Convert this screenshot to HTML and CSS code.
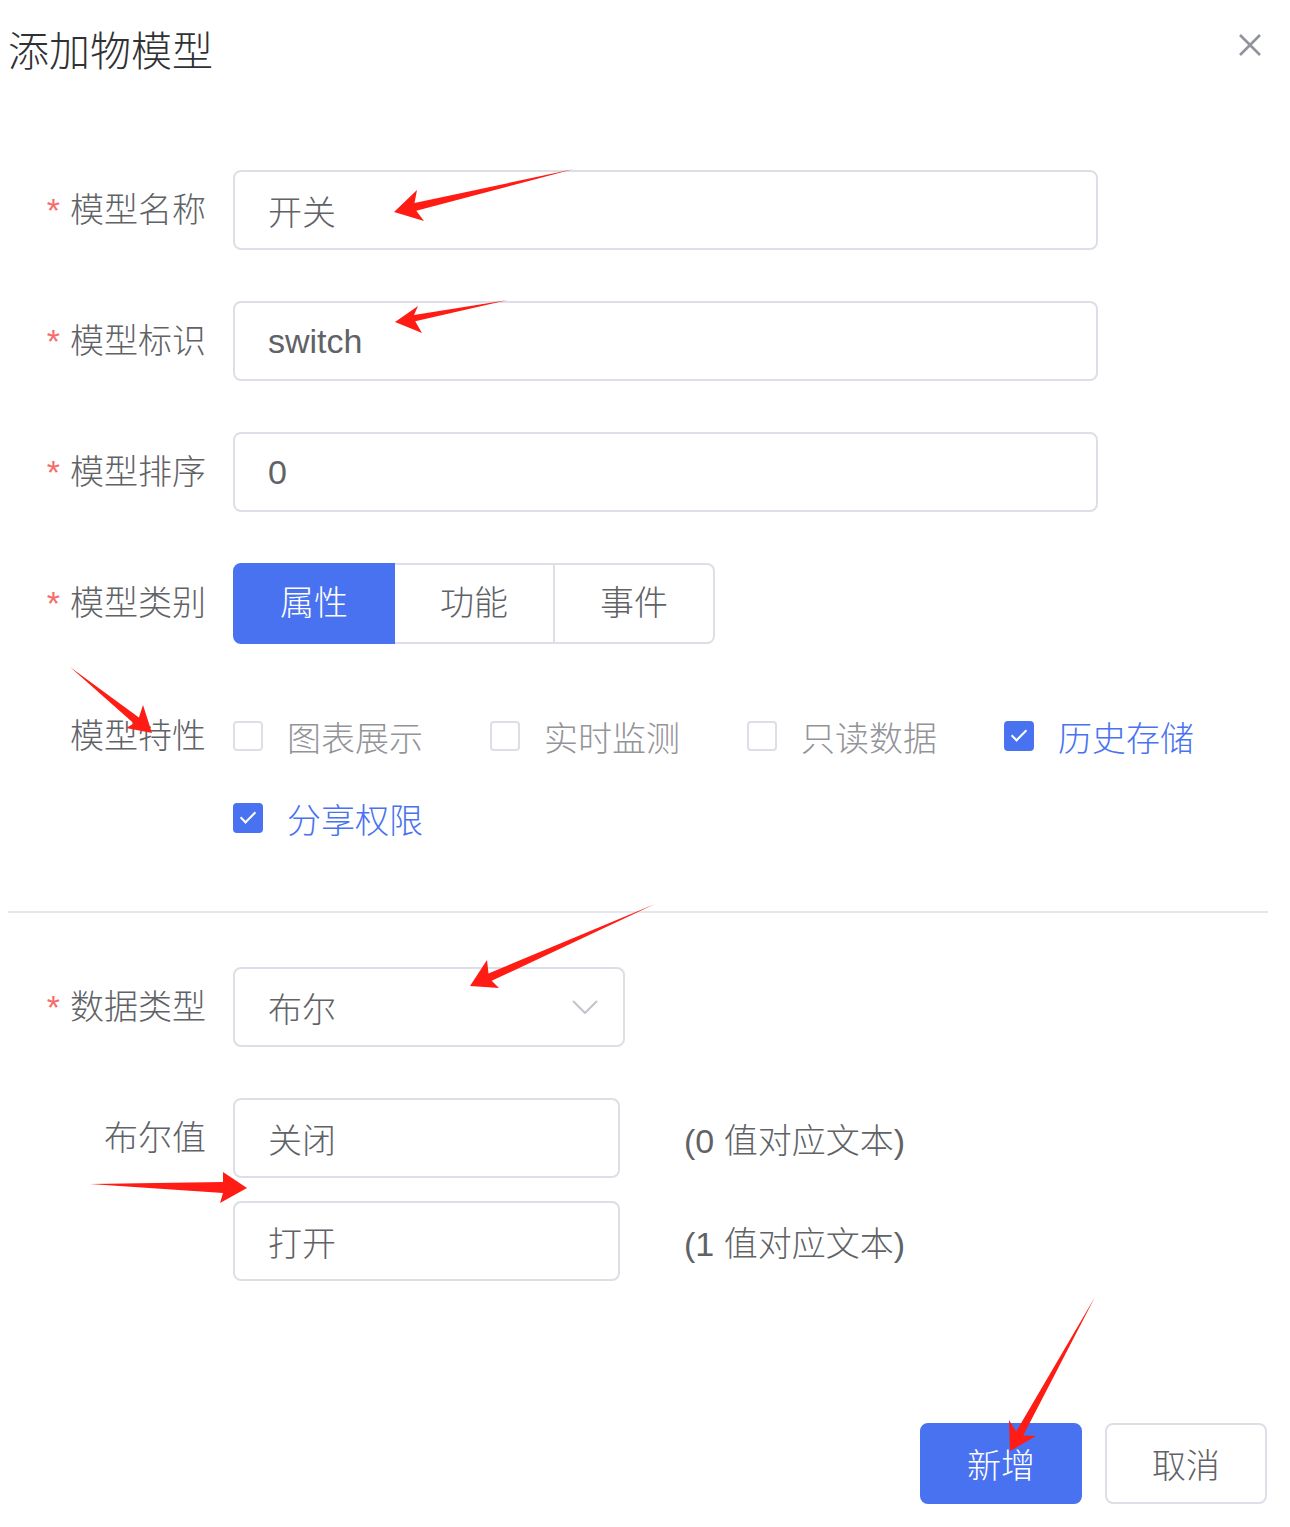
FILE: index.html
```html
<!DOCTYPE html>
<html lang="zh-CN">
<head>
  <meta charset="UTF-8">
  <meta name="viewport" content="width=device-width, initial-scale=1.0">
  <title>添加物模型</title>
  <link rel="stylesheet" href="styles.css">
</head>
<body>
  <div class="dialog">
    <div class="dialog-header">
      <span class="dialog-title">添加物模型</span>
      <svg class="dialog-close" width="24" height="24" viewBox="0 0 24 24">
        <path d="M2 2L22 22M22 2L2 22" />
      </svg>
    </div>

    <div class="form">
      <!-- base info -->
      <div class="form-item">
        <label class="form-label required">模型名称</label>
        <input class="input" type="text" value="开关">
      </div>
      <div class="form-item">
        <label class="form-label required">模型标识</label>
        <input class="input" type="text" value="switch">
      </div>
      <div class="form-item">
        <label class="form-label required">模型排序</label>
        <input class="input" type="text" value="0">
      </div>
      <div class="form-item">
        <label class="form-label required">模型类别</label>
        <div class="radio-group">
          <span class="radio-btn active">属性</span>
          <span class="radio-btn">功能</span>
          <span class="radio-btn">事件</span>
        </div>
      </div>
      <div class="form-item form-item-check">
        <label class="form-label">模型特性</label>
        <div class="checkbox-group">
          <span class="checkbox"><span class="checkbox-box"></span>图表展示</span>
          <span class="checkbox"><span class="checkbox-box"></span>实时监测</span>
          <span class="checkbox"><span class="checkbox-box"></span>只读数据</span>
          <span class="checkbox checked"><span class="checkbox-box"></span>历史存储</span>
          <span class="checkbox checked"><span class="checkbox-box"></span>分享权限</span>
        </div>
      </div>

      <div class="divider"></div>

      <!-- data type -->
      <div class="form-item">
        <label class="form-label required">数据类型</label>
        <div class="select">
          <span>布尔</span>
          <svg class="select-arrow" width="26" height="14" viewBox="0 0 26 14">
            <path d="M1 1L13 13L25 1" />
          </svg>
        </div>
      </div>
      <div class="form-item">
        <label class="form-label">布尔值</label>
        <div class="bool-list">
          <div class="bool-row">
            <input class="input input-short" type="text" value="关闭">
            <span class="bool-hint">(0 值对应文本)</span>
          </div>
          <div class="bool-row">
            <input class="input input-short" type="text" value="打开">
            <span class="bool-hint">(1 值对应文本)</span>
          </div>
        </div>
      </div>
    </div>

    <div class="dialog-footer">
      <button class="btn btn-primary">新增</button>
      <button class="btn">取消</button>
    </div>
  </div>

  <!-- annotation arrows drawn over the screenshot -->
  <svg class="marks" width="1290" height="1527" viewBox="0 0 1290 1527">
    <polygon points="574,169 414.5,203 417,190 394,212 424,221 416.3,210.8" />
    <polygon points="508,300 414,315 418,306 395,322 422,333 415.2,321.2" />
    <polygon points="70,667 138.9,717.4 143,705 152,733 126,728 133.9,723.6" />
    <polygon points="655,904 488.5,973.4 487,960 470,986 499,988 491.7,980.8" />
    <polygon points="90,1184 223,1182 223,1172 247,1188 220,1203 223,1193" />
    <polygon points="1095,1297 1023.2,1435.4 1036,1436 1010,1451 1009,1420 1016.2,1431.6" />
  </svg>
</body>
</html>
```

FILE: styles.css
```css
body {
  margin: 0;
  font-family: "Liberation Sans", "Noto Sans CJK SC", sans-serif;
  font-weight: 300;
  background-color: #fff;
  color: #606266;
}
.dialog {
  width: 1290px;
}
.dialog-header {
  display: flex;
  justify-content: space-between;
  align-items: flex-start;
  height: 170px;
  box-sizing: border-box;
  padding: 30px 28px 0 8px;
}
.dialog-title {
  font-size: 41px;
  line-height: 44px;
  color: #303133;
}
.dialog-close {
  margin-top: 3px;
  fill: none;
  stroke: #909399;
  stroke-width: 2.6;
}
.form {
  padding-left: 8px;
}
.form-item {
  display: flex;
  align-items: flex-start;
  margin-bottom: 51px;
}
.form-label {
  width: 225px;
  flex-shrink: 0;
  box-sizing: border-box;
  padding-right: 27px;
  text-align: right;
  font-size: 34px;
  line-height: 80px;
  color: #606266;
}
.form-label.required::before {
  content: "*";
  color: #f56c6c;
  margin-right: 10px;
}
.input {
  width: 865px;
  height: 80px;
  box-sizing: border-box;
  border: 2px solid #dcdfe6;
  border-radius: 8px;
  padding: 0 30px 0 33px;
  font: inherit;
  font-size: 34px;
  color: #606266;
  outline: none;
}
.input-short {
  width: 387px;
}
.radio-group {
  display: flex;
  height: 81px;
}
.radio-btn {
  width: 160px;
  box-sizing: border-box;
  text-align: center;
  font-size: 34px;
  line-height: 77px;
  border: 2px solid #dcdfe6;
  border-left: none;
  color: #606266;
}
.radio-btn:first-child {
  width: 162px;
  border-left: 2px solid #dcdfe6;
  border-radius: 8px 0 0 8px;
}
.radio-btn:last-child {
  border-radius: 0 8px 8px 0;
}
.radio-btn.active {
  background-color: #4972f0;
  border-color: #4972f0;
  color: #fff;
}
.form-item-check {
  margin-bottom: 52px;
}
.form-item-check .form-label {
  line-height: 82px;
}
.checkbox-group {
  display: flex;
  flex-wrap: wrap;
  width: 1035px;
}
.checkbox {
  display: flex;
  align-items: center;
  height: 82px;
  margin-right: 67px;
  font-size: 34px;
  color: #939399;
}
.checkbox-box {
  width: 30px;
  height: 30px;
  box-sizing: border-box;
  border: 2px solid #dcdfe6;
  border-radius: 4px;
  margin-right: 24px;
  position: relative;
}
.checkbox.checked {
  color: #4972f0;
}
.checkbox.checked .checkbox-box {
  background-color: #4972f0;
  border-color: #4972f0;
}
.checkbox.checked .checkbox-box::after {
  content: "";
  position: absolute;
  left: 9px;
  top: 3px;
  width: 6px;
  height: 13px;
  border: solid #fff;
  border-width: 0 2px 2px 0;
  transform: rotate(45deg);
}
.divider {
  height: 2px;
  width: 1260px;
  background-color: #e4e7ed;
  margin: 0 0 54px 0;
}
.select {
  display: flex;
  align-items: center;
  justify-content: space-between;
  width: 392px;
  height: 80px;
  box-sizing: border-box;
  border: 2px solid #dcdfe6;
  border-radius: 8px;
  padding: 0 25px 0 33px;
  font-size: 34px;
  color: #606266;
}
.select-arrow {
  fill: none;
  stroke: #c0c4cc;
  stroke-width: 2;
}
.bool-list {
  display: flex;
  flex-direction: column;
  gap: 23px;
}
.bool-row {
  display: flex;
  align-items: center;
}
.bool-hint {
  margin-left: 64px;
  font-size: 34px;
  color: #606266;
}
.dialog-footer {
  display: flex;
  justify-content: flex-end;
  gap: 23px;
  padding-right: 23px;
  margin-top: 142px;
}
.btn {
  width: 162px;
  height: 81px;
  border: 2px solid #dcdfe6;
  border-radius: 8px;
  background-color: #fff;
  font-family: inherit;
  font-weight: inherit;
  font-size: 34px;
  color: #606266;
}
.btn-primary {
  background-color: #4972f0;
  border-color: #4972f0;
  color: #fff;
}
.marks {
  position: absolute;
  left: 0;
  top: 0;
  pointer-events: none;
  fill: #ff1c14;
}
```
